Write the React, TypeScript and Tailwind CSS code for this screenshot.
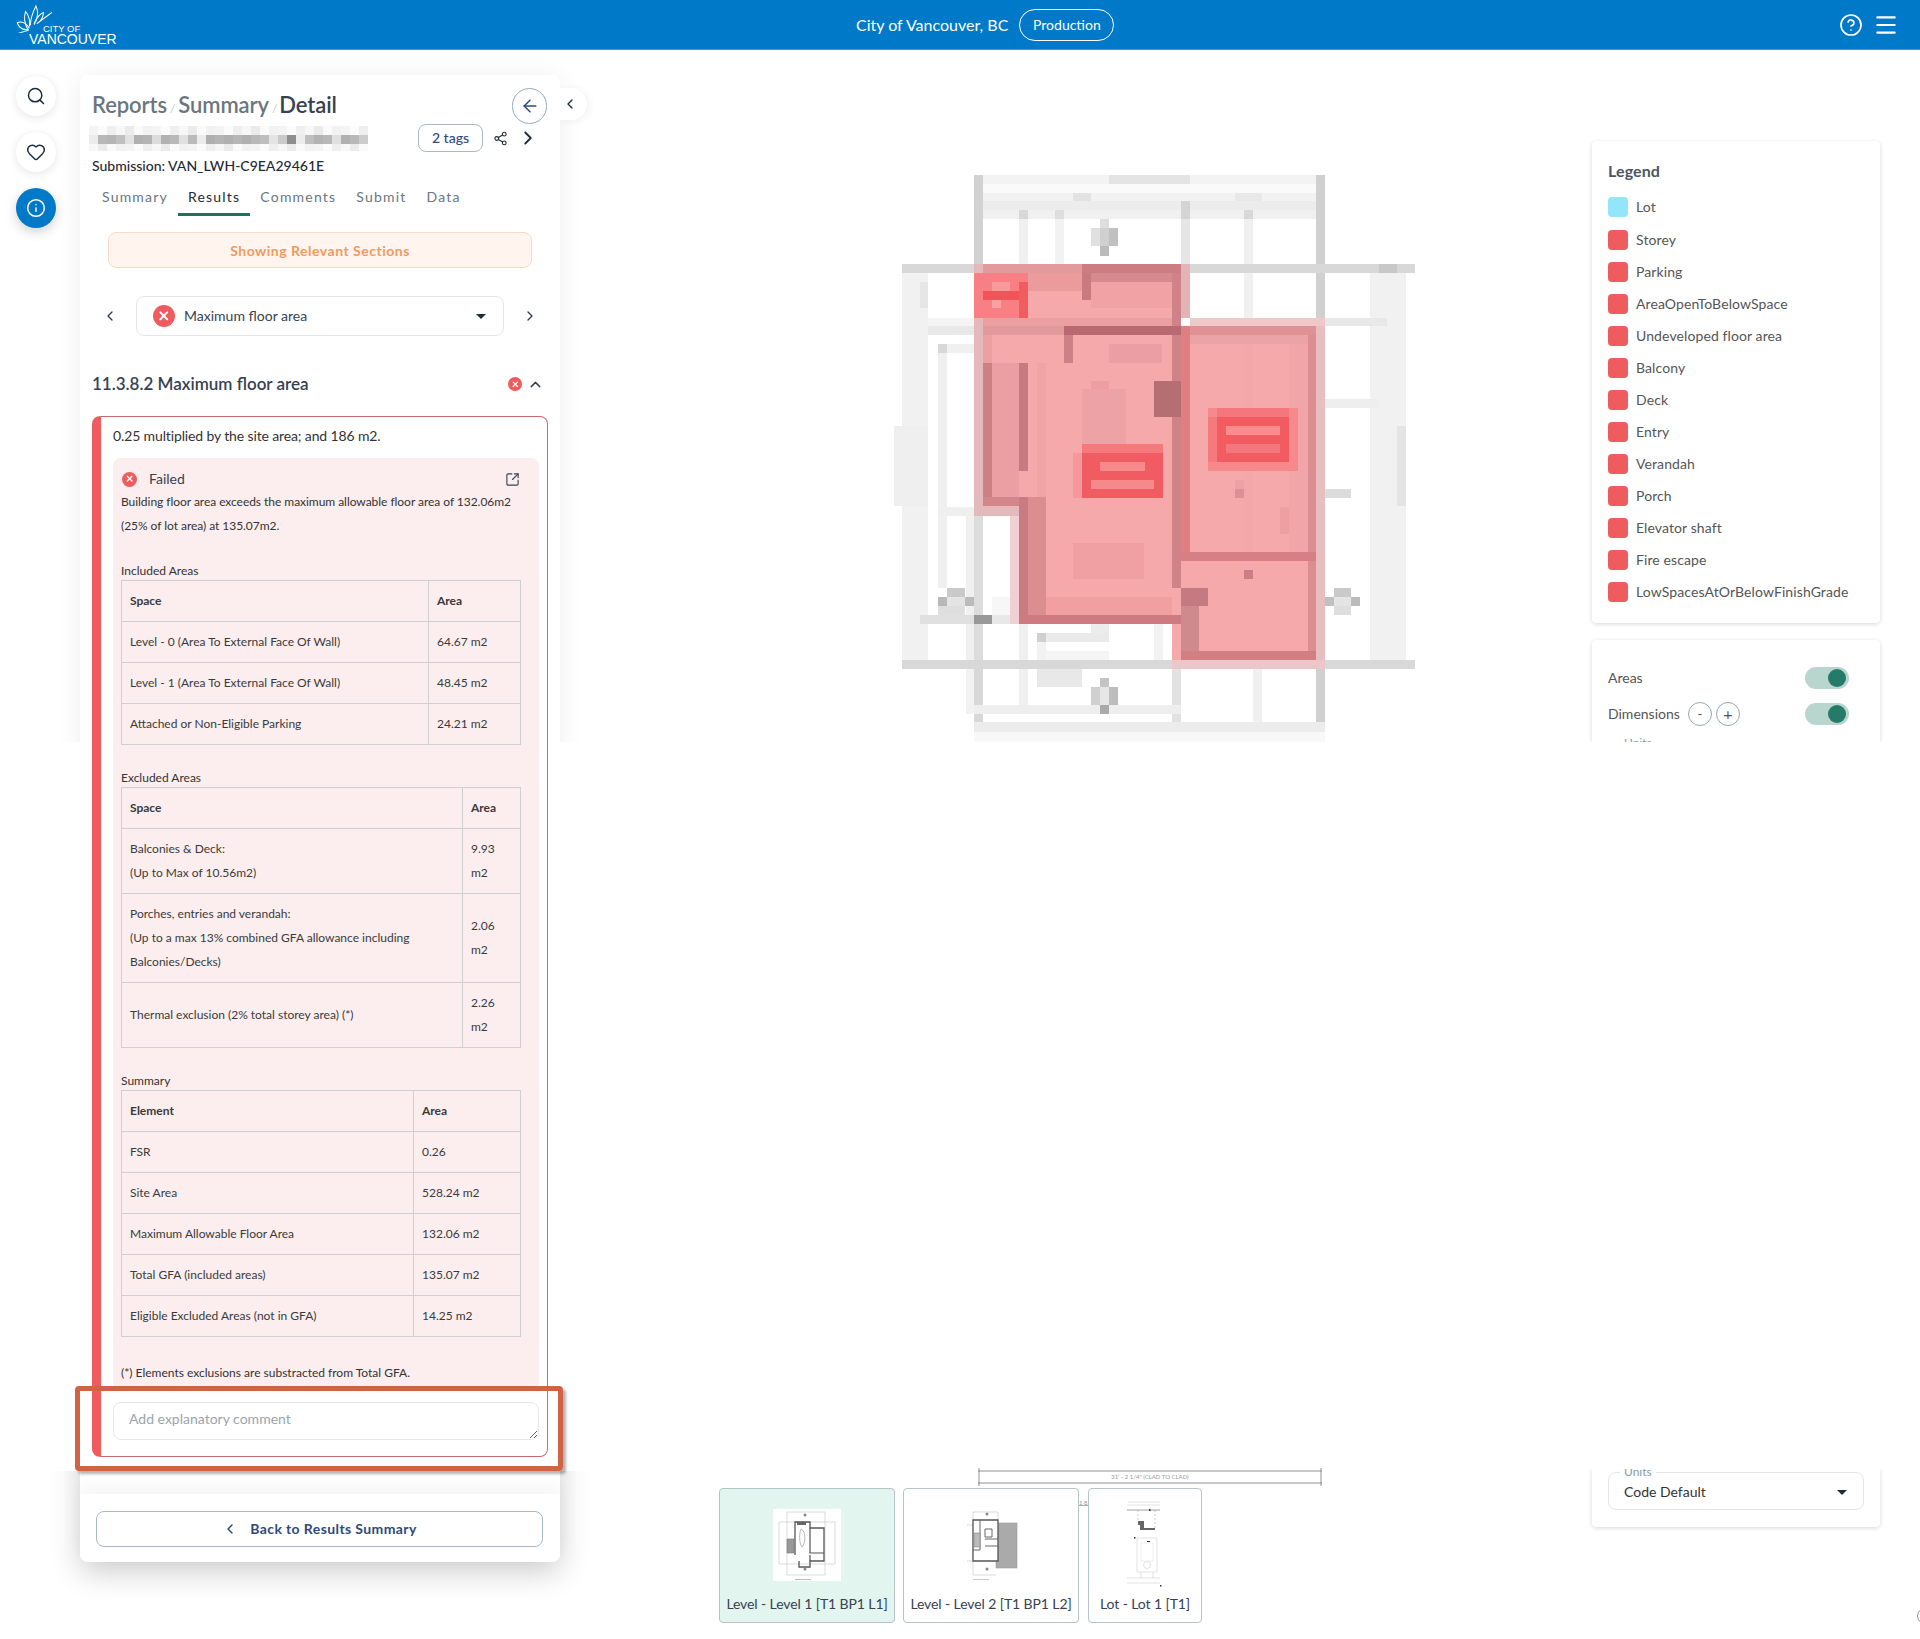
import React from "react";
import {
  ArrowLeft,
  ChevronLeft,
  ChevronRight,
  ChevronUp,
  CircleHelp,
  Heart,
  Info,
  Menu,
  Search,
  Share2,
  SquareArrowOutUpRight,
  X,
} from "lucide-react";

const legendItems = [
  "Storey",
  "Parking",
  "AreaOpenToBelowSpace",
  "Undeveloped floor area",
  "Balcony",
  "Deck",
  "Entry",
  "Verandah",
  "Porch",
  "Elevator shaft",
  "Fire escape",
  "LowSpacesAtOrBelowFinishGrade",
];

// x1, y1, x2, y2, colour. Blurred plan, painted back to front
const planRects: [number, number, number, number, string][] = [
  [263, 38, 1245, 62, "#f3f3f3"],
  [640, 38, 868, 62, "#e4e4e4"],
  [288, 62, 1222, 85, "#fafafa"],
  [288, 85, 1222, 108, "#f2f2f2"],
  [540, 85, 590, 108, "#e3e3e3"],
  [993, 85, 1070, 108, "#e8e8e8"],
  [288, 108, 1222, 132, "#ececec"],
  [288, 132, 1222, 155, "#f0f0f0"],
  [388, 132, 413, 155, "#d8d8d8"],
  [490, 132, 515, 155, "#dedede"],
  [843, 108, 868, 155, "#d4d4d4"],
  [1020, 132, 1045, 155, "#d8d8d8"],
  [263, 38, 288, 272, "#d2d2d2"],
  [1222, 38, 1245, 412, "#d0d0d0"],
  [388, 155, 413, 272, "#f0f0f0"],
  [490, 155, 515, 272, "#f2f2f2"],
  [843, 155, 868, 272, "#e6e6e6"],
  [1020, 155, 1045, 412, "#f0f0f0"],
  [62, 272, 1497, 295, "#d8d8d8"],
  [1397, 272, 1447, 295, "#c8c8c8"],
  [62, 295, 135, 1307, "#f1f1f1"],
  [38, 695, 135, 905, "#efefef"],
  [113, 318, 135, 388, "#e6e6e6"],
  [135, 412, 263, 435, "#f4f4f4"],
  [135, 435, 263, 458, "#e8e8e8"],
  [162, 482, 187, 505, "#d8d8d8"],
  [187, 482, 263, 505, "#f0f0f0"],
  [162, 505, 187, 1120, "#f0f0f0"],
  [240, 930, 263, 1310, "#f0f0f0"],
  [263, 930, 288, 1310, "#dcdcdc"],
  [162, 907, 263, 930, "#efefef"],
  [187, 1120, 237, 1143, "#c9c9c9"],
  [162, 1143, 187, 1167, "#b8b8b8"],
  [187, 1143, 237, 1167, "#e4e4e4"],
  [237, 1143, 263, 1167, "#bbbbbb"],
  [162, 1167, 237, 1190, "#dedede"],
  [113, 1190, 263, 1213, "#e0e0e0"],
  [263, 1190, 313, 1213, "#999999"],
  [313, 1143, 365, 1190, "#f7f7f7"],
  [313, 1190, 365, 1213, "#e8e8e8"],
  [62, 1307, 1497, 1330, "#d8d8d8"],
  [440, 1237, 640, 1260, "#eaeaea"],
  [440, 1237, 465, 1260, "#d0d0d0"],
  [440, 1260, 465, 1307, "#f2f2f2"],
  [465, 1283, 640, 1307, "#f5f5f5"],
  [590, 1213, 640, 1237, "#ececec"],
  [388, 1213, 413, 1307, "#f0f0f0"],
  [767, 1213, 792, 1307, "#f2f2f2"],
  [263, 1330, 288, 1525, "#d8d8d8"],
  [240, 1330, 263, 1448, "#f2f2f2"],
  [388, 1330, 413, 1448, "#f0f0f0"],
  [440, 1330, 566, 1378, "#e8e8e8"],
  [818, 1330, 843, 1525, "#e2e2e2"],
  [1045, 1330, 1070, 1525, "#f0f0f0"],
  [1222, 1330, 1245, 1525, "#d0d0d0"],
  [263, 1425, 843, 1448, "#eeeeee"],
  [615, 1355, 640, 1378, "#c4c4c4"],
  [590, 1378, 615, 1425, "#d0d0d0"],
  [615, 1378, 640, 1425, "#e6e6e6"],
  [640, 1378, 665, 1425, "#bdbdbd"],
  [615, 1425, 640, 1448, "#aaaaaa"],
  [263, 1470, 1245, 1495, "#ececec"],
  [263, 1495, 1245, 1525, "#f8f8f8"],
  [615, 155, 640, 178, "#dddddd"],
  [590, 178, 615, 225, "#e0e0e0"],
  [615, 178, 640, 225, "#d0d0d0"],
  [640, 178, 665, 225, "#c0c0c0"],
  [615, 225, 640, 250, "#bbbbbb"],
  [1372, 295, 1472, 1307, "#f1f1f1"],
  [1447, 695, 1472, 905, "#e4e4e4"],
  [1245, 412, 1420, 435, "#e8e8e8"],
  [1245, 625, 1397, 648, "#eeeeee"],
  [1245, 860, 1320, 883, "#dcdcdc"],
  [1270, 1120, 1320, 1143, "#c9c9c9"],
  [1245, 1143, 1270, 1167, "#c0c0c0"],
  [1270, 1143, 1320, 1167, "#e4e4e4"],
  [1320, 1143, 1345, 1167, "#bbbbbb"],
  [1270, 1167, 1320, 1190, "#dedede"],
  // halo
  [843, 272, 868, 412, "#e2b4b6"],
  [868, 412, 1245, 435, "#f0c8ca"],
  [1222, 435, 1245, 1330, "#e8bfc1"],
  [818, 1307, 1245, 1330, "#ecc7c9"],
  [263, 272, 288, 905, "#e4b9bb"],
  [365, 930, 388, 1213, "#f0d0d2"],
  [263, 905, 388, 930, "#e4b9bb"],
  // floor area
  [288, 272, 843, 905, "#f6a9ab"],
  [388, 905, 843, 1213, "#f6a9ab"],
  [843, 435, 1222, 1307, "#f6a9ab"],
  [818, 1213, 843, 1307, "#f6a9ab"],
  // mottling
  [565, 600, 690, 790, "#eda3a6"],
  [590, 577, 640, 600, "#ee9ea1"],
  [640, 482, 790, 530, "#ec9fa2"],
  [540, 1002, 740, 1095, "#f0a0a3"],
  [465, 1143, 818, 1190, "#f29fa2"],
  [1120, 907, 1197, 978, "#ee9fa2"],
  [993, 838, 1045, 883, "#efa0a3"],
  [993, 860, 1045, 883, "#df9094"],
  [1020, 1072, 1045, 1095, "#c97f84"],
  [1170, 907, 1197, 955, "#c97f84"],
  [413, 295, 565, 342, "#ec9b9d"],
  [590, 318, 818, 388, "#f0a2a5"],
  [1145, 482, 1197, 1025, "#f2a5a8"],
  [440, 530, 465, 882, "#f0a4a6"],
  [1020, 482, 1045, 1025, "#f4a7a9"],
  // walls
  [288, 272, 843, 295, "#e39a9c"],
  [565, 272, 843, 295, "#cb7d82"],
  [590, 295, 818, 318, "#d68a8e"],
  [565, 295, 590, 365, "#c87a7f"],
  [818, 295, 843, 435, "#cf8388"],
  [288, 412, 818, 435, "#ec9fa1"],
  [288, 435, 515, 458, "#e09a9c"],
  [515, 435, 868, 458, "#b96a70"],
  [515, 458, 540, 530, "#cd8085"],
  [288, 458, 313, 530, "#ee9fa1"],
  [288, 530, 313, 905, "#cd7f84"],
  [313, 530, 388, 882, "#ec9fa2"],
  [388, 530, 413, 812, "#c67b80"],
  [288, 882, 413, 905, "#d2868a"],
  [388, 882, 465, 1190, "#dc8d90"],
  [388, 882, 413, 1213, "#c87b80"],
  [388, 1190, 843, 1213, "#cf7a80"],
  [818, 458, 843, 1120, "#cf8387"],
  [843, 435, 868, 1025, "#df7f84"],
  [768, 577, 843, 672, "#b56e72"],
  [868, 435, 1222, 458, "#df9296"],
  [868, 458, 1197, 482, "#eba3a5"],
  [1197, 458, 1222, 1307, "#db8d90"],
  [843, 1025, 1222, 1048, "#d67f84"],
  [843, 1167, 893, 1283, "#cf8a8e"],
  [843, 1120, 918, 1167, "#c47a80"],
  [843, 1283, 1222, 1307, "#d27f84"],
  // red patches
  [263, 295, 413, 412, "#f88084"],
  [288, 342, 413, 365, "#f25358"],
  [388, 318, 413, 412, "#f05c60"],
  [313, 318, 365, 342, "#f89a9c"],
  [313, 365, 338, 388, "#f8a0a2"],
  [540, 767, 565, 883, "#f4989b"],
  [565, 743, 792, 767, "#f3797d"],
  [565, 767, 792, 883, "#f05c62"],
  [615, 790, 742, 813, "#f6898c"],
  [590, 838, 767, 860, "#f6898c"],
  [918, 648, 1170, 812, "#f6898c"],
  [943, 672, 1145, 790, "#f25c61"],
  [918, 672, 943, 790, "#f47a7e"],
  [943, 648, 1145, 672, "#f3777c"],
  [968, 695, 1120, 720, "#f88c8f"],
  [968, 743, 1120, 767, "#f3777c"],
];

const blurCells = [
  "#ececec", "#b8b8b8", "#b5b5b5", "#c0c0c0", "#e2e2e2", "#b0b0b0", "#b4b4b4", "#dcdcdc",
  "#b2b2b2", "#b8b8b8", "#e0e0e0", "#bbbbbb", "#ececec", "#afafaf", "#b5b5b5", "#b0b0b0",
  "#b6b6b6", "#b0b0b0", "#b8b8b8", "#bebebe", "#e4e4e4", "#cacaca", "#8e8e8e", "#ececec",
  "#bfbfbf", "#b3b3b3", "#b8b8b8", "#e0e0e0", "#b0b0b0", "#b8b8b8", "#cccccc",
];
const blurEdge = ["#f4f4f4", "#fbfbfb", "#efefef", "#f7f7f7", "#ebebeb", "#fafafa", "#f2f2f2"];

const summaryRows = [
  ["Element", "Area"],
  ["FSR", "0.26"],
  ["Site Area", "528.24 m2"],
  ["Maximum Allowable Floor Area", "132.06 m2"],
  ["Total GFA (included areas)", "135.07 m2"],
  ["Eligible Excluded Areas (not in GFA)", "14.25 m2"],
];

const FailIcon = ({ className }: { className: string }) => (
  <span className={`flex items-center justify-center rounded-full bg-[#ef5c5f] ${className}`}>
    <X className="w-[62%] h-[62%] text-white" strokeWidth={3.5} />
  </span>
);

const Caret = () => (
  <span className="ml-auto h-0 w-0 border-x-[5px] border-t-[5px] border-x-transparent border-t-[#1f2d3a]" />
);

const Cell = ({ children, head }: { children: React.ReactNode; head?: boolean }) => (
  <td className={`border border-[#d0d0d0] px-2 py-2 text-[12px] leading-6 text-[#3a3a3a] ${head ? "font-bold" : ""}`}>
    {children}
  </td>
);

const AreaTable = ({ rows, areaWidth }: { rows: React.ReactNode[][]; areaWidth: string }) => (
  <table className="w-[400px] table-fixed border-collapse">
    <colgroup>
      <col />
      <col className={areaWidth} />
    </colgroup>
    <tbody>
      {rows.map((row, i) => (
        <tr key={i}>
          <Cell head={i === 0}>{row[0]}</Cell>
          <Cell head={i === 0}>{row[1]}</Cell>
        </tr>
      ))}
    </tbody>
  </table>
);

const Toggle = () => (
  <span className="ml-auto flex h-[22px] w-11 items-center justify-end rounded-full bg-[#b8d5ce] pr-[3px]">
    <span className="h-[18px] w-[18px] rounded-full bg-[#257a68]" />
  </span>
);

const Logo = () => (
  <div className="relative h-[49px] w-[120px] text-white">
    <svg viewBox="0 0 40 30" className="absolute left-4 top-[5px] h-[28px] w-[38px]" fill="none" stroke="white" strokeWidth="1.1">
      <path d="M13 27 C8 20 8 12 10 7 C13 11 15 17 14 23" />
      <path d="M15 22 C15 14 18 7 21 1 C24 7 23 15 19 21" />
      <path d="M19 20 C21 14 26 9 29 8 C29 13 26 18 22 20 L38 8" />
      <path d="M13 26 C8 27 3 25 1 19 C6 17 11 20 14 25" />
      <path d="M13 27 C9 28 5 29 1 31" />
    </svg>
    <span className="absolute left-[43px] top-[23px] text-[9.5px] leading-[11px] [font-family:'Liberation_Sans',sans-serif]">CITY OF</span>
    <span className="absolute left-[29px] top-[31px] text-[14px] leading-[16px] [font-family:'Liberation_Sans',sans-serif]">VANCOUVER</span>
  </div>
);

const PlanLevel1 = () => (
  <svg viewBox="0 0 68 72" className="h-[72px] w-[68px] bg-white" fill="none" stroke="#aaa" strokeWidth="0.6">
    <path d="M6 13H62M6 55H62M14 3V66M52 3V66M14 3H52M14 66H52M6 13V55M62 13V55" stroke="#c4c4c4" />
    <path d="M22 46V13H37V19H51V52H37V58H26V52" stroke="#555" strokeWidth="1.3" />
    <path d="M37 19V44H51M37 52V46" stroke="#555" strokeWidth="1.2" />
    <path d="M14 30H21V44H14Z" fill="#999" stroke="#777" />
    <path d="M28 20C33 22 33 34 29 38C26 34 26 24 28 20Z" stroke="#888" />
    <path d="M24 13H33V16H24Z" fill="#666" stroke="none" />
    <rect x="22" y="70" width="16" height="1" fill="#bbb" stroke="none" />
    <circle cx="32" cy="6" r="1.5" fill="#888" stroke="none" />
    <circle cx="32" cy="60" r="1.5" fill="#888" stroke="none" />
  </svg>
);

const PlanLevel2 = () => (
  <svg viewBox="0 0 68 72" className="h-[72px] w-[68px]" fill="none" stroke="#aaa" strokeWidth="0.6">
    <path d="M16 3H41V11M16 3V66H39M10 16H16M10 52H16" stroke="#c4c4c4" />
    <rect x="39" y="14" width="21" height="45" fill="#aaa" stroke="#999" />
    <path d="M16 11H41V52H16Z" fill="white" stroke="#555" strokeWidth="1.3" />
    <path d="M23 11V41M23 41H16M28 30H41M28 37H41M28 20H35V28H28Z" stroke="#666" strokeWidth="1" />
    <rect x="17" y="24" width="6" height="14" fill="#bbb" stroke="#888" />
    <circle cx="30" cy="5" r="1.5" fill="#888" stroke="none" />
    <circle cx="30" cy="60" r="1.5" fill="#888" stroke="none" />
    <rect x="16" y="70" width="16" height="1" fill="#ccc" stroke="none" />
  </svg>
);

const PlanLot = () => (
  <svg viewBox="0 0 40 86" className="h-[86px] w-10" fill="none" stroke="#c4c4c4" strokeWidth="0.5">
    <path d="M3 1H35M2 4H35M12 37H32V71H12ZM16 71V77M28 71V77M2 77H35M2 82H35" />
    <path d="M2 9H35" stroke="#777" strokeWidth="0.7" />
    <path d="M13 9V20M30 9V27" stroke="#999" strokeDasharray="2 2" />
    <path d="M13 20H19V27H30V29H15V24H13Z" fill="#666" stroke="none" />
    <circle cx="22" cy="64" r="3.5" />
    <path d="M16 42H28V60H16Z" stroke="#ddd" />
    <rect x="9" y="36" width="1.5" height="1.5" fill="#333" stroke="none" />
    <rect x="24" y="8" width="1.5" height="2" fill="#333" stroke="none" />
    <rect x="22" y="40" width="3" height="1" fill="#333" stroke="none" />
    <rect x="35" y="84" width="1.5" height="1.5" fill="#333" stroke="none" />
  </svg>
);

export default function App() {
  return (
    <div className="relative h-[1639px] w-[1920px] overflow-hidden bg-white [font-family:Lato,sans-serif]">
      {/* Header */}
      <header className="relative flex h-[50px] items-center border-b border-[#5c8fb3] bg-[#0079c8] text-white">
        <Logo />
        <div className="ml-[736px] flex items-center gap-[11px]">
          <span className="text-base">City of Vancouver, BC</span>
          <span className="flex h-8 w-[95px] items-center justify-center rounded-full border border-white text-sm">Production</span>
        </div>
        <div className="ml-auto flex items-center gap-[10px] pr-[21px]">
          <CircleHelp className="h-6 w-6" strokeWidth={1.7} />
          <Menu className="h-[26px] w-[26px]" strokeWidth={2} />
        </div>
      </header>

      <div className="relative flex h-[1589px] pt-[25px]">
        {/* Left rail */}
        <div className="ml-4 mt-px flex w-10 flex-col gap-4">
          <button className="flex h-10 w-10 items-center justify-center rounded-full bg-white shadow-[0_2px_10px_rgba(0,0,0,0.1)]">
            <Search className="h-5 w-5 text-[#1f2d3a]" strokeWidth={1.8} />
          </button>
          <button className="flex h-10 w-10 items-center justify-center rounded-full bg-white shadow-[0_2px_10px_rgba(0,0,0,0.1)]">
            <Heart className="h-5 w-5 text-[#1f2d3a]" strokeWidth={1.8} />
          </button>
          <button className="flex h-10 w-10 items-center justify-center rounded-full bg-[#0079c8] shadow-[0_4px_12px_rgba(0,0,0,0.18)]">
            <Info className="h-5 w-5 text-white" strokeWidth={1.8} />
          </button>
        </div>

        {/* Results panel */}
        <div className="relative ml-6 w-[480px] shrink-0">
          {/* the panel's shadow only shows in the two visible bands of the capture */}
          <div className="absolute -left-10 top-[-25px] h-[692px] w-[560px] overflow-hidden">
            <div className="absolute left-10 top-[25px] h-[1000px] w-[480px] rounded-lg bg-white shadow-[0_2px_24px_rgba(0,0,0,0.07)]" />
          </div>
          <div className="absolute -left-10 top-[1396px] h-[168px] w-[560px] overflow-hidden">
            <div className="absolute left-10 top-[-50px] h-[141px] w-[480px] rounded-lg bg-white shadow-[0_10px_30px_rgba(0,0,0,0.2)]" />
          </div>
          <div className="absolute left-[480px] top-[13px] flex h-8 w-[27px] items-center rounded-r-full bg-white pl-[2px] shadow-[2px_1px_8px_rgba(0,0,0,0.06)]">
            <ChevronLeft className="h-4 w-4 text-[#1f2d3a]" strokeWidth={2} />
          </div>

          <div className="relative flex h-[1487px] flex-col rounded-lg bg-white">
            <div className="mt-[13px] flex h-9 items-center pl-3 pr-[13px]">
              <div className="flex items-baseline pt-[2px] text-[22px] font-semibold leading-7 tracking-[-0.1px] text-[#6b7680]">
                <span>Reports</span>
                <span className="mx-[3px] text-[12px] font-normal text-[#c2c8ce]">/</span>
                <span>Summary</span>
                <span className="mx-[3px] text-[12px] font-normal text-[#c2c8ce]">/</span>
                <span className="-ml-px text-[#374151]">Detail</span>
              </div>
              <button className="ml-auto flex h-9 w-[35px] items-center justify-center rounded-full border border-[#9aabb8] bg-white">
                <ArrowLeft className="h-5 w-5 text-[#2f4a7a]" strokeWidth={1.8} />
              </button>
            </div>

            <div className="flex h-7 items-center pl-[9px]">
              <svg width="279" height="25" viewBox="0 0 279 25" shapeRendering="crispEdges">
                {blurCells.map((c, i) => (
                  <g key={i}>
                    <rect x={i * 9} y="0" width="9" height="9" fill={blurEdge[i % 7]} />
                    <rect x={i * 9} y="9" width="9" height="9" fill={c} />
                    <rect x={i * 9} y="18" width="9" height="7" fill={blurEdge[(i + 3) % 7]} />
                  </g>
                ))}
              </svg>
              <span className="ml-[50px] flex h-7 w-[65px] items-center justify-center rounded-lg border border-[#a9b8c4] text-sm font-medium text-[#2f4a7a]">2 tags</span>
              <Share2 className="ml-[10px] h-[15px] w-[15px] text-[#1f2d3a]" strokeWidth={1.8} />
              <ChevronRight className="ml-[9px] h-[22px] w-[22px] text-[#1f2d3a]" strokeWidth={2} />
            </div>

            <div className="mt-1 h-5 pl-3 text-sm font-medium leading-5 text-[#1f2937]">Submission: VAN_LWH-C9EA29461E</div>

            <div className="ml-3 mt-[2px] flex h-[38px] text-sm tracking-[1.2px] text-[#6b7680]">
              <span className="px-[10px] pt-[9px]">Summary</span>
              <span className="border-b-[3px] border-[#1f6f5f] px-[10px] pt-[9px] text-[#1f2937]">Results</span>
              <span className="px-[10px] pt-[9px]">Comments</span>
              <span className="px-[10px] pt-[9px]">Submit</span>
              <span className="px-[10px] pt-[9px]">Data</span>
            </div>

            <div className="ml-7 mt-4 flex h-9 w-[424px] items-center justify-center rounded-lg border border-[#f5dcc8] bg-[#fff5ee] text-[14px] font-bold tracking-[0.5px] text-[#f09a5f]">
              Showing Relevant Sections
            </div>

            <div className="mt-7 flex h-10 items-center pl-[22px]">
              <ChevronLeft className="h-4 w-4 text-[#2f3f4f]" strokeWidth={2} />
              <div className="ml-[18px] flex h-10 w-[368px] items-center rounded-lg border border-[#e3e6e8] pl-4 pr-[17px]">
                <FailIcon className="h-[22px] w-[22px]" />
                <span className="ml-[9px] text-sm text-[#374151]">Maximum floor area</span>
                <Caret />
              </div>
              <ChevronRight className="ml-[18px] h-4 w-4 text-[#2f3f4f]" strokeWidth={2} />
            </div>

            <div className="mt-9 flex h-6 items-center pl-3 pr-[16px]">
              <span className="text-[17px] font-semibold text-[#374151]">11.3.8.2 Maximum floor area</span>
              <FailIcon className="ml-auto h-[14px] w-[14px]" />
              <ChevronUp className="ml-[5px] h-[17px] w-[17px] text-[#374151]" strokeWidth={2} />
            </div>

            {/* Rule card */}
            <div className="ml-3 mt-5 h-[1041px] w-[456px] rounded-lg border border-l-[9px] border-[#c96a6a] border-l-[#ef5c5f] pl-3 pr-2 pt-[9px]">
              <p className="text-sm leading-5 tracking-[-0.13px] text-[#333]">0.25 multiplied by the site area; and 186 m2.</p>

              <div className="mt-3 h-[932px] rounded-lg bg-[#fceeee] pl-2 pr-[18px] pt-[10px] text-[#333]">
                <div className="flex h-[22px] items-center">
                  <FailIcon className="ml-px h-[15px] w-[15px]" />
                  <span className="ml-3 text-sm text-[#374151]">Failed</span>
                  <SquareArrowOutUpRight className="ml-auto mr-px h-[15px] w-[15px] text-[#374151]" strokeWidth={1.8} />
                </div>
                <p className="w-[400px] text-[12px] leading-6 tracking-[-0.04px]">
                  Building floor area exceeds the maximum allowable floor area of 132.06m2 (25% of lot area) at 135.07m2.
                </p>

                <div className="mt-6 text-[12px] leading-[18px]">Included Areas</div>
                <AreaTable
                  areaWidth="w-[92px]"
                  rows={[
                    ["Space", "Area"],
                    ["Level - 0 (Area To External Face Of Wall)", "64.67 m2"],
                    ["Level - 1 (Area To External Face Of Wall)", "48.45 m2"],
                    ["Attached or Non-Eligible Parking", "24.21 m2"],
                  ]}
                />

                <div className="mt-6 text-[12px] leading-[18px]">Excluded Areas</div>
                <AreaTable
                  areaWidth="w-[58px]"
                  rows={[
                    ["Space", "Area"],
                    [
                      <>
                        Balconies &amp; Deck:
                        <br />
                        (Up to Max of 10.56m2)
                      </>,
                      "9.93 m2",
                    ],
                    [
                      <>
                        Porches, entries and verandah:
                        <br />
                        (Up to a max 13% combined GFA allowance including Balconies/Decks)
                      </>,
                      "2.06 m2",
                    ],
                    ["Thermal exclusion (2% total storey area) (*)", "2.26 m2"],
                  ]}
                />

                <div className="mt-6 text-[12px] leading-[18px]">Summary</div>
                <AreaTable areaWidth="w-[107px]" rows={summaryRows} />

                <p className="mt-6 text-[12px] leading-6">(*) Elements exclusions are substracted from Total GFA.</p>
              </div>

              <textarea
                placeholder="Add explanatory comment"
                className="mt-3 block h-[38px] w-[426px] rounded-lg border border-[#e5e7eb] bg-white pl-[15px] pt-[6px] text-sm outline-none placeholder:text-[#9aa5ae]"
              />
            </div>

            {/* Footer */}
            <div className="mt-auto flex h-[68px] items-center justify-center rounded-b-lg bg-white pt-px shadow-[0_-8px_14px_rgba(0,0,0,0.04)]">
              <button className="-ml-px flex h-9 w-[447px] items-center justify-center gap-3 rounded-lg border border-[#a9b8c4] text-sm font-bold tracking-[0.4px] text-[#2f4a7a]">
                <ChevronLeft className="h-4 w-4" strokeWidth={2.2} />
                Back to Results Summary
              </button>
            </div>
          </div>
        </div>

        {/* Drawing canvas */}
        <div className="relative flex-1">
          <svg
            viewBox="0 0 1568 1522"
            preserveAspectRatio="none"
            shapeRendering="crispEdges"
            className="absolute left-[320px] top-[85px] h-[582px] w-[560px]"
          >
            {planRects.map(([x1, y1, x2, y2, c], i) => (
              <rect key={i} x={x1} y={y1} width={x2 - x1} height={y2 - y1} fill={c} />
            ))}
          </svg>

          <svg viewBox="0 0 350 20" className="absolute left-[416px] top-[1393px] h-5 w-[350px]" fill="none" stroke="#777" strokeWidth="0.8">
            <path d="M2 3H346M2 15H346M3 0V18M345 0V18" />
            <text x="174" y="11" fontSize="6" fill="#999" stroke="none" textAnchor="middle">31' - 2 1/4" (CLAD TO CLAD)</text>
          </svg>
          <div className="absolute left-[519px] top-[1425px] h-[6px] w-[10px] border-b border-[#aaa] text-[6px] leading-[6px] text-[#999]">1 8</div>

          <div className="absolute bottom-4 left-[159px] flex text-sm text-[#374151]">
            <div className="flex h-[135px] w-[176px] flex-col items-center rounded border border-[#b5c4c4] bg-[#e3f5ef] pt-5">
              <PlanLevel1 />
              <span className="mt-[13px] leading-5 tracking-[-0.1px]">Level - Level 1 [T1 BP1 L1]</span>
            </div>
            <div className="ml-2 flex h-[135px] w-[176px] flex-col items-center rounded border border-[#b5c4c4] bg-white pt-5">
              <PlanLevel2 />
              <span className="mt-[13px] leading-5 tracking-[-0.1px]">Level - Level 2 [T1 BP1 L2]</span>
            </div>
            <div className="ml-[9px] flex h-[135px] w-[114px] flex-col items-center rounded border border-[#b5c4c4] bg-white pt-3">
              <PlanLot />
              <span className="mt-[7px] leading-5 tracking-[-0.1px]">Lot - Lot 1 [T1]</span>
            </div>
          </div>
        </div>

        {/* Right column */}
        <div className="mr-10 flex w-[288px] shrink-0 flex-col">
          <div className="mt-[66px] h-[482px] rounded bg-white px-4 pt-[18px] tracking-[0.1px] shadow-[0_1px_4px_rgba(0,0,0,0.16)]">
            <h3 className="mb-[9px] text-base font-bold leading-6 text-[#4b5563]">Legend</h3>
            <div className="-mt-px flex h-8 items-center gap-2 text-sm text-[#555]">
              <span className="h-5 w-5 rounded bg-[#93e5fa]" />
              Lot
            </div>
            <div className="mt-px">
              {legendItems.map((item) => (
                <div key={item} className="flex h-8 items-center gap-2 text-sm text-[#555]">
                  <span className="h-5 w-5 rounded bg-[#ef5c5f]" />
                  {item}
                </div>
              ))}
            </div>
          </div>

          <div className="relative mt-[17px] h-[102px] overflow-hidden rounded-t bg-white px-4 pt-[27px] text-sm text-[#555] shadow-[0_1px_4px_rgba(0,0,0,0.16)] [clip-path:inset(-6px_-6px_0_-6px)]">
            <div className="flex h-[22px] items-center pr-[15px]">
              Areas
              <Toggle />
            </div>
            <div className="mt-[14px] flex h-[22px] items-center pr-[15px]">
              Dimensions
              <span className="ml-[8px] flex h-6 w-6 items-center justify-center rounded-full border border-[#9aa5ae] text-[13px]">-</span>
              <span className="ml-[4px] flex h-6 w-6 items-center justify-center rounded-full border border-[#9aa5ae] text-base">+</span>
              <Toggle />
            </div>
            <div className="mt-[9px] pl-4 text-[12px] text-[#8b9aa5]">Units</div>
          </div>

          <div className="relative mt-[727px] h-[58px] rounded-b bg-white px-4 pt-[3px] shadow-[0_1px_4px_rgba(0,0,0,0.16)] [clip-path:inset(0_-6px_-6px_-6px)]">
            <div className="flex h-[38px] items-center rounded-lg border border-[#e3e6e8] pl-[15px] pr-4 pt-[2px] text-sm text-[#333]">
              Code Default
              <Caret />
            </div>
            <span className="absolute left-[28px] top-[-6px] bg-white px-1 text-[12px] leading-[18px] text-[#8b9aa5]">Units</span>
          </div>
        </div>
      </div>

      {/* annotation over the comment box */}
      <div className="absolute left-[75px] top-[1386px] h-[85px] w-[488px] rounded-sm border-[5px] border-[#cf6347] shadow-[3px_3px_3px_rgba(0,0,0,0.3)]" />
      {/* edge of a clipped button */}
      <div className="absolute left-[1917px] top-[1608px] h-4 w-4 rounded-full border border-[#999]" />
    </div>
  );
}
